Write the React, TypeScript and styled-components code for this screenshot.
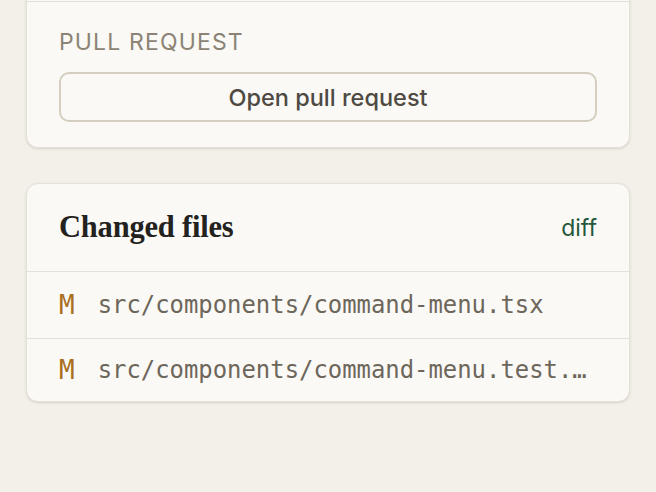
import React from "react";
import styled, { createGlobalStyle } from "styled-components";

const GlobalStyle = createGlobalStyle`
  html, body {
    margin: 0;
    padding: 0;
    background: #f3f0ea;
  }
  body {
    font-family: Inter, "Noto Sans", sans-serif;
    overflow: hidden;
  }
`;

const Page = styled.div`
  display: flex;
  flex-direction: column;
  gap: 35px;
  padding: 0 26px 40px;
  margin-top: -14px;
`;

const Card = styled.section`
  background: #faf9f5;
  border: 1px solid #e6e1d7;
  border-radius: 12px;
  box-shadow: 0 1px 3px rgba(90, 80, 60, 0.12), 0 1px 1px rgba(90, 80, 60, 0.06);
  overflow: hidden;
`;

const Section = styled.div<{ $divided?: boolean }>`
  display: flex;
  flex-direction: column;
  gap: 16px;
  padding: 26px 32px 25px;
  border-top: ${(p) => (p.$divided ? "1px solid #e6e1d8" : "none")};
`;

const HiddenTop = styled.div`
  height: 14px;
`;

const Label = styled.div`
  font-family: Inter, sans-serif;
  font-size: 23px;
  line-height: 28px;
  letter-spacing: 0.05em;
  text-transform: uppercase;
  color: #8b8374;
`;

const Button = styled.button`
  height: 50px;
  width: 100%;
  border: 2px solid #d4cebf;
  border-radius: 10px;
  background: #faf9f5;
  font-family: Inter, sans-serif;
  font-size: 23.5px;
  font-weight: 500;
  color: #4e4a43;
  cursor: pointer;
`;

const Header = styled.header`
  display: flex;
  align-items: center;
  justify-content: space-between;
  height: 88px;
  padding: 0 32px;
  box-sizing: border-box;
  border-bottom: 1px solid #e6e1d8;
`;

const Title = styled.h2`
  margin: 0;
  font-family: "Liberation Serif", "DejaVu Serif", serif;
  font-weight: 700;
  font-size: 30.5px;
  letter-spacing: -0.2px;
  color: #24221e;
`;

const DiffLink = styled.a`
  font-family: Inter, sans-serif;
  font-size: 23px;
  color: #24573b;
  text-decoration: none;
`;

const FileList = styled.ul`
  list-style: none;
  margin: 0;
  padding: 0;
`;

const FileRow = styled.li`
  display: flex;
  align-items: center;
  gap: 23px;
  height: 66px;
  box-sizing: border-box;
  padding: 0 32px;
  & + & {
    border-top: 1px solid #e6e1d8;
  }
  &:last-child {
    height: 63px;
  }
`;

const Status = styled.span`
  flex: none;
  font-family: "DejaVu Sans Mono", "Liberation Mono", monospace;
  font-size: 26px;
  color: #a96f1e;
`;

const Path = styled.span`
  flex: 1;
  min-width: 0;
  overflow: hidden;
  white-space: nowrap;
  text-overflow: ellipsis;
  font-family: "DejaVu Sans Mono", "Liberation Mono", monospace;
  font-size: 23.9px;
  color: #6d665b;
`;

const files = [
  { status: "M", path: "src/components/command-menu.tsx" },
  { status: "M", path: "src/components/command-menu.test.tsx" },
];

export default function App() {
  return (
    <>
      <GlobalStyle />
      <Page>
        <Card>
          <HiddenTop />
          <Section $divided>
            <Label>Pull request</Label>
            <Button type="button">Open pull request</Button>
          </Section>
        </Card>
        <Card>
          <Header>
            <Title>Changed files</Title>
            <DiffLink href="#">diff</DiffLink>
          </Header>
          <FileList>
            {files.map((f) => (
              <FileRow key={f.path}>
                <Status>{f.status}</Status>
                <Path>{f.path}</Path>
              </FileRow>
            ))}
          </FileList>
        </Card>
      </Page>
    </>
  );
}
